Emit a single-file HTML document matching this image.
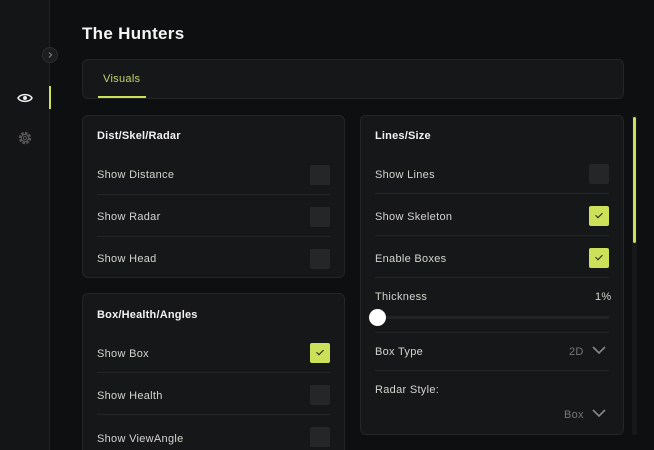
<!DOCTYPE html>
<html style="overflow:hidden;width:654px;height:450px"><head><style>
*{margin:0;padding:0;box-sizing:border-box}
body{width:654px;height:450px;background:#0e0f10;font-family:"Liberation Sans",sans-serif;position:relative;overflow:hidden;color:#d8d8d4}
.abs{position:absolute}
.side{left:0;top:0;width:50px;height:450px;background:#141516;border-right:1px solid #222}
.card{position:absolute;background:#161718;border:1px solid #242526;border-radius:6px}
.t{position:absolute;font-size:11px;color:#d4d4cf;letter-spacing:0.3px}
.h{position:absolute;font-size:11px;font-weight:bold;color:#f2f2f2;letter-spacing:0.2px}
.sep{position:absolute;height:1px;background:#242526}
.cb{position:absolute;width:20px;height:20px;background:#252627;border-radius:2px}
.on{background:#cde05a}
.on::after{content:"";position:absolute;left:8px;top:5px;width:3px;height:6px;border:solid #222;border-width:0 1px 1px 0;transform:rotate(45deg)}
</style></head><body>
<div class="abs side"></div>
<div class="abs" style="left:42px;top:47px;width:16px;height:16px;border-radius:50%;background:#1c1d1e;border:1px solid #2c2d2e"></div>
<svg class="abs" style="left:46px;top:51px" width="8" height="8"><path d="M3 1.5L5.5 4L3 6.5" stroke="#888" fill="none" stroke-width="1"/></svg>
<svg class="abs" style="left:17px;top:91px" width="16" height="14"><path d="M1 7C3.5 2.5 12.5 2.5 15 7C12.5 11.5 3.5 11.5 1 7Z" stroke="#eee" fill="none" stroke-width="1.6"/><circle cx="8" cy="7" r="2" fill="#eee"/></svg>
<div class="abs" style="left:49px;top:86px;width:2px;height:23px;background:#cde05a"></div>
<svg class="abs" style="left:18px;top:131px" width="14" height="14"><circle cx="7" cy="7" r="5" stroke="#555" stroke-width="2.4" fill="none" stroke-dasharray="2.6 1.3"/><circle cx="7" cy="7" r="3.6" stroke="#555" stroke-width="1.2" fill="none"/><circle cx="7" cy="7" r="1.6" stroke="#555" fill="none"/></svg>
<div class="abs" style="left:82px;top:24px;font-size:17px;font-weight:bold;color:#f5f5f5;letter-spacing:0.3px">The Hunters</div>
<div class="card" style="left:82px;top:59px;width:542px;height:40px"></div>
<div class="t" style="left:103px;top:73px;color:#c4d46a">Visuals</div>
<div class="abs" style="left:98px;top:96px;width:48px;height:2px;background:#cde05a"></div>

<div class="card" style="left:82px;top:115px;width:263px;height:163px"></div>
<div class="h" style="left:97px;top:130px">Dist/Skel/Radar</div>
<div class="t" style="left:97px;top:169px">Show Distance</div><div class="cb" style="left:310px;top:165px"></div>
<div class="sep" style="left:97px;top:194px;width:233px"></div>
<div class="t" style="left:97px;top:211px">Show Radar</div><div class="cb" style="left:310px;top:207px"></div>
<div class="sep" style="left:97px;top:236px;width:233px"></div>
<div class="t" style="left:97px;top:253px">Show Head</div><div class="cb" style="left:310px;top:249px"></div>

<div class="card" style="left:82px;top:293px;width:263px;height:170px"></div>
<div class="h" style="left:97px;top:309px">Box/Health/Angles</div>
<div class="t" style="left:97px;top:348px">Show Box</div><div class="cb on" style="left:310px;top:343px"></div>
<div class="sep" style="left:97px;top:372px;width:233px"></div>
<div class="t" style="left:97px;top:390px">Show Health</div><div class="cb" style="left:310px;top:385px"></div>
<div class="sep" style="left:97px;top:414px;width:233px"></div>
<div class="t" style="left:97px;top:433px">Show ViewAngle</div><div class="cb" style="left:310px;top:427px"></div>

<div class="card" style="left:360px;top:115px;width:264px;height:320px"></div>
<div class="h" style="left:375px;top:130px">Lines/Size</div>
<div class="t" style="left:375px;top:169px">Show Lines</div><div class="cb" style="left:589px;top:164px"></div>
<div class="sep" style="left:375px;top:193px;width:234px"></div>
<div class="t" style="left:375px;top:211px">Show Skeleton</div><div class="cb on" style="left:589px;top:206px"></div>
<div class="sep" style="left:375px;top:235px;width:234px"></div>
<div class="t" style="left:375px;top:253px">Enable Boxes</div><div class="cb on" style="left:589px;top:248px"></div>
<div class="sep" style="left:375px;top:277px;width:234px"></div>
<div class="t" style="left:375px;top:291px">Thickness</div><div class="t" style="left:595px;top:291px">1%</div>
<div class="abs" style="left:375px;top:316px;width:234px;height:3px;background:#222324"></div>
<div class="abs" style="left:369px;top:309px;width:17px;height:17px;border-radius:50%;background:#fff"></div>
<div class="sep" style="left:375px;top:332px;width:234px"></div>
<div class="t" style="left:375px;top:346px">Box Type</div>
<div class="t" style="left:569px;top:346px;color:#777">2D</div>
<svg class="abs" style="left:591px;top:345px" width="16" height="10"><path d="M2 2L8 8L14 2" stroke="#888" stroke-width="1.6" fill="none"/></svg>
<div class="sep" style="left:375px;top:370px;width:234px"></div>
<div class="t" style="left:375px;top:384px">Radar Style:</div>
<div class="t" style="left:564px;top:409px;color:#777">Box</div>
<svg class="abs" style="left:591px;top:408px" width="16" height="10"><path d="M2 2L8 8L14 2" stroke="#888" stroke-width="1.6" fill="none"/></svg>

<div class="abs" style="left:632px;top:115px;width:5px;height:320px;background:#17181a;border-radius:2px"></div>
<div class="abs" style="left:633px;top:117px;width:3px;height:126px;background:#cde05a;border-radius:2px"></div>
</body></html>
